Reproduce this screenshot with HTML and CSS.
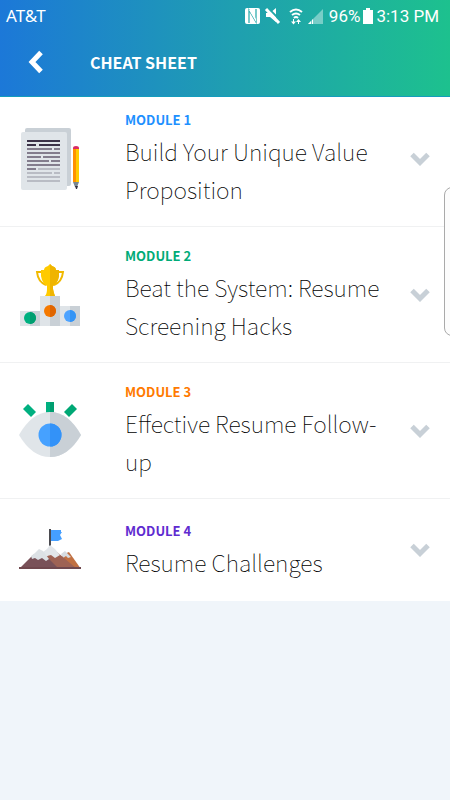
FILE: index.html
```html
<!DOCTYPE html>
<html lang="en">
<head>
<meta charset="utf-8">
<meta name="viewport" content="width=device-width, initial-scale=1">
<title>Cheat Sheet</title>
<link rel="stylesheet" href="styles.css">
</head>
<body>
<header class="header">
  <div class="status">
    <span class="carrier">AT&amp;T</span>
    <div class="indicators">
      <svg width="82" height="20" viewBox="0 0 82 20" fill="#fff" aria-hidden="true">
        <rect x="1" y="2" width="15" height="16" rx="2"/>
        <path d="M5 17V4l7 12M12 3v13L5 4" fill="none" stroke="#20a7a8" stroke-width="1.200"/>
        <path d="M7 4l5 9v3l-7-12z"/>
        <path d="M22 7h4l6-5v14l-6-5h-4z"/>
        <path d="M23 1l14 14" stroke="#20a7a8" stroke-width="2"/>
        <path d="M22 3l13 14" stroke="#fff" stroke-width="3"/>
        <path d="M46 6q6-5 12 0M48 9q4-3 8 0M50 12q2-2 4 0" fill="none" stroke="#fff" stroke-width="2"/>
        <path d="M49.500 13v4M54.500 18v-4" stroke="#fff"/>
        <path d="M47 15.500h5l-2.500 3zM52 16h5l-2.500-3z"/>
        <path d="M79 3v15H64z" opacity=".4"/>
        <path d="M64 18l3-3v3zM68 18v-4l1-1v5z"/>
      </svg>
      <span>96%</span>
      <svg width="10" height="18" viewBox="0 0 10 18" fill="#fff" aria-hidden="true"><path d="M3 1h4v2h3v14H0V3h3z"/></svg>
      <span>3:13 PM</span>
    </div>
  </div>
  <div class="nav">
    <button class="back" type="button" aria-label="Back">
      <svg width="18" height="24" viewBox="0 0 18 24" fill="none" stroke="#fff" stroke-width="5" aria-hidden="true"><path d="M14 2.500L5 12l9 9.500"/></svg>
    </button>
    <h1 class="heading">CHEAT SHEET</h1>
  </div>
</header>

<main class="modules">
  <button class="module" type="button" aria-expanded="false">
    <svg class="picture" viewBox="0 0 62 64" aria-hidden="true">
      <rect x="6" y="1" width="46" height="58" rx="2" fill="#c9d0d6"/>
      <rect x="2" y="5" width="46" height="58" rx="2" fill="#e0e5e9"/>
      <g fill="none" stroke-width="2">
        <path d="M8 14h33M8 18h9M20 18h21" stroke="#3b3248"/>
        <path d="M8 22h25M35 22h6M8 26h33M8 30h14M24 30h17M8 34h22M32 34h9M8 38h33M8 42h9" stroke="#837d8d"/>
        <path d="M19 42h22M8 46h25M35 46h6M8 50h33M8 54h33" stroke="#b9bcc4"/>
      </g>
      <path d="M54 21q0-2 3-2t3 2v2h-6z" fill="#da2c65"/>
      <path d="M54 22h3v33h-3z" fill="#ff9100"/><path d="M57 22h3v33h-3z" fill="#ffcd00"/>
      <path d="M54 55h6l-2 5h-2z" fill="#798690"/><path d="M56 59h3l-1 3h-1z" fill="#343344"/>
    </svg>
    <span class="copy"><span class="label blue">MODULE 1</span><span class="title">Build Your Unique Value Proposition</span></span>
    <svg class="chevron" viewBox="0 0 20 14" aria-hidden="true"><path d="M2 2.500l8 8 8-8"/></svg>
  </button>

  <button class="module" type="button" aria-expanded="false">
    <svg class="picture" viewBox="0 0 62 64" aria-hidden="true">
      <path d="M1 48h20v15H1z" fill="#dfe4e8"/><path d="M11 48h10v15H11z" fill="#c9d0d6"/>
      <path d="M41 43h20v20H41z" fill="#dfe4e8"/><path d="M51 43h10v20H51z" fill="#c9d0d6"/>
      <path d="M21 33h20v30H21z" fill="#dfe4e8"/><path d="M31 33h10v30H31z" fill="#c9d0d6"/>
      <circle cx="11" cy="55" r="6" fill="#00b080"/><path d="M11 49a6 6 0 0 1 0 12z" fill="#009e70"/>
      <circle cx="31" cy="48" r="6" fill="#f57900"/><path d="M31 42a6 6 0 0 1 0 12z" fill="#df6500"/>
      <circle cx="51" cy="53" r="6" fill="#4da3ff"/><path d="M51 47a6 6 0 0 1 0 12z" fill="#3494f5"/>
      <path d="M23 9h-5q1 10 9 13M39 9h5q-1 10-9 13" fill="none" stroke="#f1b900" stroke-width="2"/>
      <path d="M22 7h3q0-3 4-4l2-2 2 2q4 1 4 4h3q1 12-6 16v3q1 5 2 7H26q2-2 2-7v-3q-7-4-6-16z" fill="#ffca00"/>
      <path d="M31 1l2 2q4 1 4 4h3q1 12-6 16v3q1 5 2 7h-5z" fill="#efb400"/>
    </svg>
    <span class="copy"><span class="label green">MODULE 2</span><span class="title">Beat the System: Resume Screening Hacks</span></span>
    <svg class="chevron" viewBox="0 0 20 14" aria-hidden="true"><path d="M2 2.500l8 8 8-8"/></svg>
  </button>

  <button class="module" type="button" aria-expanded="false">
    <svg class="picture" viewBox="0 0 62 64" aria-hidden="true">
      <path d="M4 10l5-5 8 8-5 5z" fill="#00b080"/><path d="M58 10l-5-5-8 8 5 5z" fill="#00a875"/>
      <path d="M27 3h4v12h-4z" fill="#00b080"/><path d="M31 3h4v12h-4z" fill="#009e70"/>
      <path d="M0 36Q13 13 31 13t31 23Q49 58 31 58T0 36z" fill="#e0e5e9"/>
      <path d="M31 13q18 0 31 23Q49 58 31 58z" fill="#c9d0d6"/>
      <circle cx="31" cy="36" r="11.500" fill="#46a1ff"/><path d="M31 24.500a11.500 11.500 0 0 1 0 23z" fill="#3392f8"/>
    </svg>
    <span class="copy"><span class="label orange">MODULE 3</span><span class="title">Effective Resume Follow-up</span></span>
    <svg class="chevron" viewBox="0 0 20 14" aria-hidden="true"><path d="M2 2.500l8 8 8-8"/></svg>
  </button>

  <button class="module" type="button" aria-expanded="false">
    <svg class="picture" viewBox="0 0 62 64" aria-hidden="true">
      <path d="M31 12h11v2h1l-2 3 2 4-4 2H31z" fill="#459fff"/><path d="M30 11h2v17h-2z" fill="#4b4b50"/>
      <path d="M36 49l9-13 5-2 12 17H38z" fill="#c17042"/>
      <path d="M42 36l4-3 6 6-3 1-2-2-3 2z" fill="#d7dce1"/>
      <path d="M22 49l8-14 8-1 20 17H30z" fill="#9e6254"/>
      <path d="M20 37l8-6 3-4 5 4 5 6-5 3-4-3-4 1-4 6z" fill="#e2e6ea"/>
      <path d="M0 51l14-14 9-3 17 17z" fill="#795158"/>
      <path d="M12 38l4-3 4-4 4 2 6 8-3 2-4-3-4 2-3-2-3 1z" fill="#dce1e5"/>
      <path d="M0 49h62v2H0z" fill="#70484e"/>
    </svg>
    <span class="copy"><span class="label purple">MODULE 4</span><span class="title">Resume Challenges</span></span>
    <svg class="chevron" viewBox="0 0 20 14" aria-hidden="true"><path d="M2 2.500l8 8 8-8"/></svg>
  </button>
</main>
<div class="edge-handle"></div>
</body>
</html>
```
FILE: styles.css
```css
* { box-sizing: border-box; }

body {
  margin: 0;
  min-height: 100vh;
  background: #f0f5fa;
  font-family: "Noto Sans CJK JP", "Noto Sans", sans-serif;
  overflow-x: hidden;
}

button {
  margin: 0;
  border: 0;
  background: none;
  font: inherit;
  color: inherit;
  text-align: left;
  cursor: pointer;
}

.header {
  position: relative;
  z-index: 1;
  color: #fff;
  background: linear-gradient(90deg, #1c78d8, #1f9fb0 52%, #1dc18e);
  border-bottom: 1px solid #149dbd;
}

.status {
  display: flex;
  justify-content: space-between;
  align-items: center;
  height: 32px;
  padding: 0 11px 0 6px;
  font: 17px/32px Roboto, sans-serif;
}

.carrier {
  font-family: "Noto Sans", sans-serif;
}

.indicators {
  display: flex;
  align-items: center;
  gap: 3px;
}

.nav {
  display: flex;
  align-items: center;
  height: 64px;
  padding: 0 16px 4px 0;
}

.back {
  display: flex;
  justify-content: center;
  width: 72px;
  padding: 8px 0;
}

.heading {
  margin: 0 0 0 18px;
  font-size: 16px;
  line-height: 24px;
  font-weight: 700;
}

.modules {
  margin-top: -6px;
  background: #fff;
}

.module {
  display: grid;
  grid-template-columns: 100px 1fr 60px;
  align-items: center;
  width: 100%;
  min-height: 102px;
  padding: 16px 0;
  border-bottom: 1px solid #f0f1f2;
}

.module:last-child { border-bottom: 0; }

.picture {
  width: 62px;
  height: 64px;
  justify-self: center;
}

.copy { padding: 0 0 2px 25px; }

.label,
.title { display: block; }

.label {
  font-size: 13px;
  line-height: 25px;
  font-weight: 700;
}

.title {
  font-size: 23px;
  line-height: 38px;
  font-weight: 100;
  color: #000;
}

.blue { color: #1e90ff; }
.green { color: #00ab78; }
.orange { color: #ff7a00; }
.purple { color: #5f2bd0; }

.chevron {
  width: 20px;
  height: 14px;
  justify-self: center;
  fill: none;
  stroke: #c8d0d7;
  stroke-width: 5;
}

.edge-handle {
  position: absolute;
  z-index: 2;
  top: 187px;
  right: -10px;
  width: 16px;
  height: 149px;
  border: 1px solid #aaa;
  border-radius: 8px;
  background: #fcfcfc;
}
```
